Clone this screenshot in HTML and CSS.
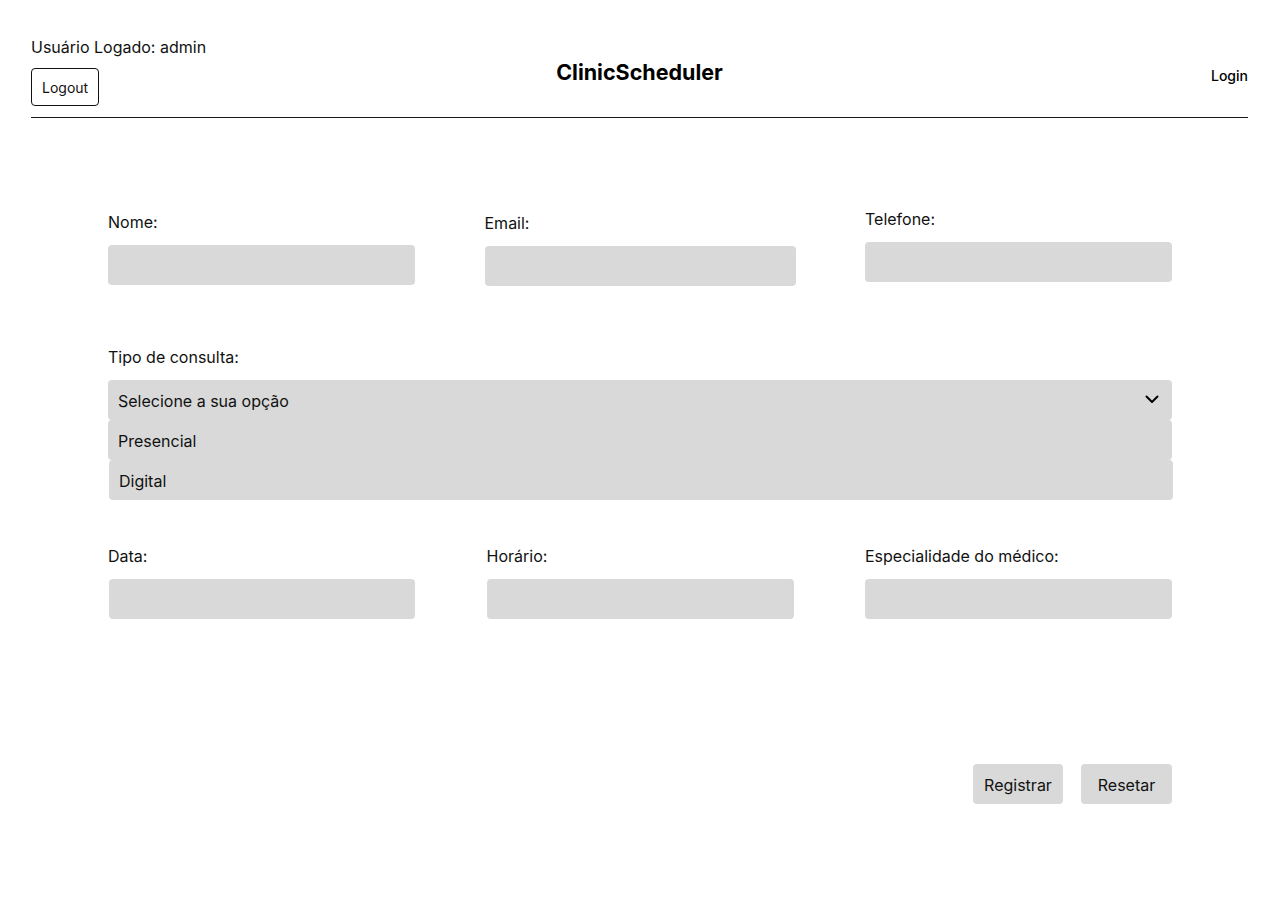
FILE: index.html
```html
<!DOCTYPE html>
<html lang="pt">
<head>
<meta charset="utf-8">
<title>ClinicScheduler</title>
<link rel="stylesheet" href="styles.css">
</head>
<body>
<header class="topbar">
  <div class="user">
    <span class="user-label">Usuário Logado: admin</span>
    <button class="logout">Logout</button>
  </div>
  <h1 class="brand">ClinicScheduler</h1>
  <a class="login">Login</a>
</header>
<main class="form">
  <div class="row three">
    <div class="field"><label>Nome:</label><div class="input"></div></div>
    <div class="field f-email"><label>Email:</label><div class="input"></div></div>
    <div class="field f-tel"><label>Telefone:</label><div class="input"></div></div>
  </div>
  <div class="row tipo">
    <label>Tipo de consulta:</label>
    <div class="select">
      <div class="opt head">Selecione a sua opção
        <svg class="chev" width="14" height="9" viewBox="0 0 14 9"><path d="M1.5 1.5 L7 7 L12.5 1.5" fill="none" stroke="#000" stroke-width="2" stroke-linecap="round" stroke-linejoin="round"/></svg>
      </div>
      <div class="opt">Presencial</div>
      <div class="opt shift">Digital</div>
    </div>
  </div>
  <div class="row three r3">
    <div class="field shift"><label>Data:</label><div class="input"></div></div>
    <div class="field"><label>Horário:</label><div class="input"></div></div>
    <div class="field"><label>Especialidade do médico:</label><div class="input"></div></div>
  </div>
  <div class="actions">
    <button class="btn">Registrar</button>
    <button class="btn reset">Resetar</button>
  </div>
</main>
</body>
</html>
```
FILE: styles.css
```css
* { box-sizing: border-box; }
body {
  margin: 0;
  background: #fff;
  color: #111;
  font-family: Inter, "Noto Sans", sans-serif;
  font-size: 16px;
}
.topbar {
  margin: 0 32px 0 31px;
  padding-top: 37px;
  padding-bottom: 11px;
  border-bottom: 1px solid #1a1a1a;
  display: flex;
  align-items: center;
  justify-content: space-between;
  position: relative;
}
.user {
  display: flex;
  flex-direction: column;
  align-items: flex-start;
  gap: 11px;
}
.user-label { line-height: 20px; }
.logout {
  font-family: inherit;
  font-size: 14px;
  color: #111;
  background: #fff;
  border: 1px solid #111;
  border-radius: 4px;
  height: 38px;
  padding: 0 10px;
}
.brand {
  margin: 0;
  font-size: 21.5px;
  font-weight: 700;
  color: #000;
  position: absolute;
  left: 50%;
  transform: translateX(-50%);
  top: 58px;
  line-height: 28px;
  white-space: nowrap;
}
.login {
  font-size: 14px;
  font-weight: 500;
  color: #000;
  margin-top: 8px;
}
.form {
  margin: 0 108px;
  padding-top: 94px;
}
.row.three {
  display: grid;
  grid-template-columns: 307px 311px 307px;
  justify-content: space-between;
}
.field { display: flex; flex-direction: column; }
label { line-height: 20px; display: block; }
.input {
  height: 40px;
  background: #d9d9d9;
  border-radius: 4px;
  margin-top: 13px;
}
.f-email { transform: translateY(1px); }
.f-tel { transform: translateY(-3px); }
.tipo { margin-top: 62px; }
.select { margin-top: 13px; }
.opt {
  height: 40px;
  background: #d9d9d9;
  border-radius: 4px;
  padding-left: 10px;
  padding-top: 2px;
  display: flex;
  align-items: center;
  position: relative;
}
.opt.shift { margin-left: 1px; margin-right: -1px; }
.chev { position: absolute; right: 13px; top: 15px; }
.r3 { margin-top: 46px; grid-template-columns: 307px 307px 307px !important; }
.field.shift .input { margin-left: 1px; }
.actions {
  display: flex;
  justify-content: flex-end;
  gap: 18px;
  margin-top: 145px;
}
.btn {
  font-family: inherit;
  font-size: 16px;
  color: #111;
  background: #d9d9d9;
  border: none;
  border-radius: 4px;
  height: 40px;
  width: 90px;
  padding: 0;
  padding-top: 2px;
}
.btn.reset { width: 91px; }
```
